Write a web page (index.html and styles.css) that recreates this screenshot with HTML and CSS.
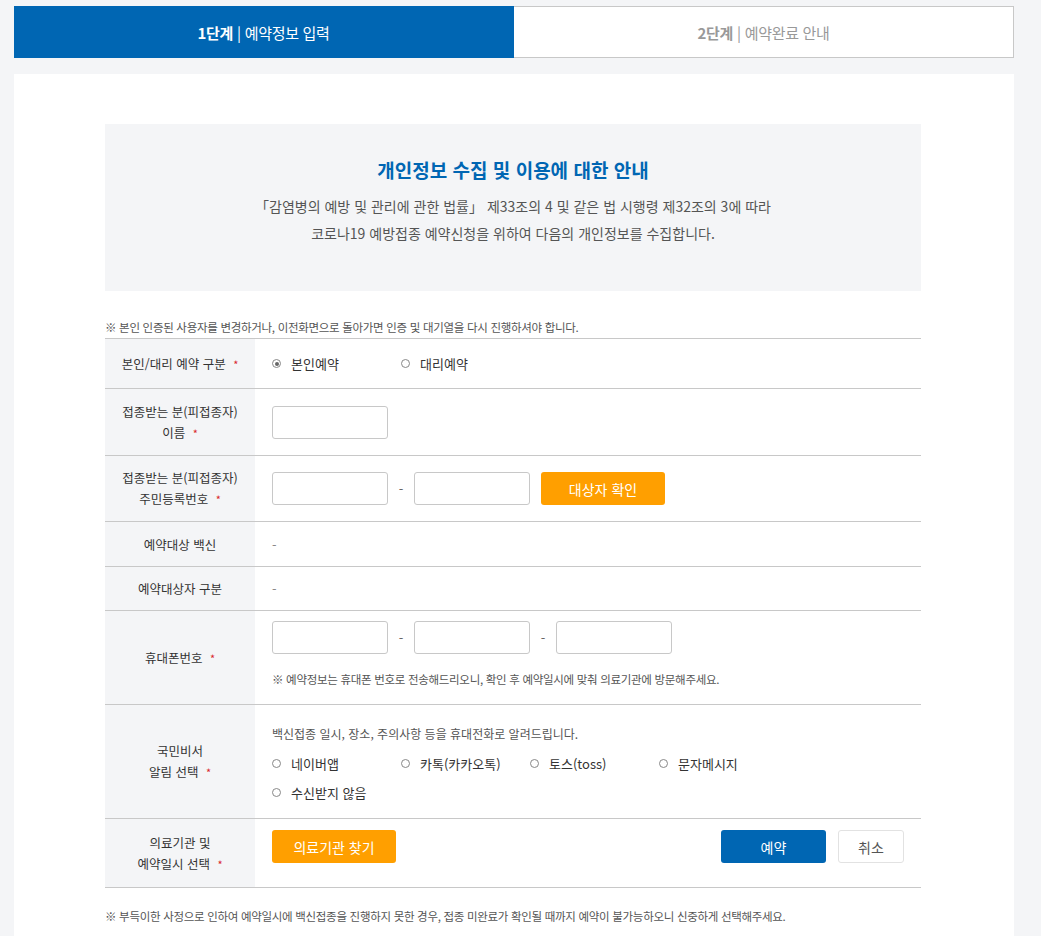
FILE: index.html
```html
<!DOCTYPE html>
<html lang="ko">
<head>
    <meta charset="UTF-8">
    <meta name="viewport" content="width=device-width, initial-scale=1.0">
    <title>코로나19 예방접종 예약</title>
    <link rel="stylesheet" href="styles.css">
</head>
<body>
    <div class="steps">
        <div class="step active"><strong>1단계</strong> | 예약정보 입력</div>
        <div class="step"><strong>2단계</strong> | 예약완료 안내</div>
    </div>

    <div class="card">
        <div class="info-box">
            <h2>개인정보 수집 및 이용에 대한 안내</h2>
            <p>「감염병의 예방 및 관리에 관한 법률」 제33조의 4 및 같은 법 시행령 제32조의 3에 따라<br>코로나19 예방접종 예약신청을 위하여 다음의 개인정보를 수집합니다.</p>
        </div>

        <p class="notice">※ 본인 인증된 사용자를 변경하거나, 이전화면으로 돌아가면 인증 및 대기열을 다시 진행하셔야 합니다.</p>

        <div class="form-table">
            <div class="row row-type">
                <div class="label"><p>본인/대리 예약 구분 <span class="req">*</span></p></div>
                <div class="field">
                    <div class="radios">
                        <label class="radio checked"><span class="dot"></span>본인예약</label>
                        <label class="radio"><span class="dot"></span>대리예약</label>
                    </div>
                </div>
            </div>
            <div class="row row-name">
                <div class="label"><p>접종받는 분(피접종자)<br>이름 <span class="req">*</span></p></div>
                <div class="field">
                    <input type="text" class="input">
                </div>
            </div>
            <div class="row row-id">
                <div class="label"><p>접종받는 분(피접종자)<br>주민등록번호 <span class="req">*</span></p></div>
                <div class="field inline">
                    <input type="text" class="input">
                    <span class="dash">-</span>
                    <input type="text" class="input">
                    <button class="btn orange">대상자 확인</button>
                </div>
            </div>
            <div class="row row-short">
                <div class="label"><p>예약대상 백신</p></div>
                <div class="field"><span class="muted">-</span></div>
            </div>
            <div class="row row-short last">
                <div class="label"><p>예약대상자 구분</p></div>
                <div class="field"><span class="muted">-</span></div>
            </div>
            <div class="row row-phone">
                <div class="label"><p>휴대폰번호 <span class="req">*</span></p></div>
                <div class="field top">
                    <div class="inline">
                        <input type="text" class="input">
                        <span class="dash">-</span>
                        <input type="text" class="input">
                        <span class="dash">-</span>
                        <input type="text" class="input">
                    </div>
                    <p class="field-note">※ 예약정보는 휴대폰 번호로 전송해드리오니, 확인 후 예약일시에 맞춰 의료기관에 방문해주세요.</p>
                </div>
            </div>
            <div class="row row-alarm">
                <div class="label"><p>국민비서<br>알림 선택 <span class="req">*</span></p></div>
                <div class="field top">
                    <p class="field-desc">백신접종 일시, 장소, 주의사항 등을 휴대전화로 알려드립니다.</p>
                    <div class="radios">
                        <label class="radio"><span class="dot"></span>네이버앱</label>
                        <label class="radio"><span class="dot"></span>카톡(카카오톡)</label>
                        <label class="radio"><span class="dot"></span>토스(toss)</label>
                        <label class="radio"><span class="dot"></span>문자메시지</label>
                        <label class="radio"><span class="dot"></span>수신받지 않음</label>
                    </div>
                </div>
            </div>
            <div class="row row-hospital">
                <div class="label"><p>의료기관 및<br>예약일시 선택 <span class="req">*</span></p></div>
                <div class="field split">
                    <button class="btn orange">의료기관 찾기</button>
                    <div class="actions">
                        <button class="btn blue">예약</button>
                        <button class="btn plain">취소</button>
                    </div>
                </div>
            </div>
        </div>

        <p class="notice bottom">※ 부득이한 사정으로 인하여 예약일시에 백신접종을 진행하지 못한 경우, 접종 미완료가 확인될 때까지 예약이 불가능하오니 신중하게 선택해주세요.</p>
    </div>
</body>
</html>
```

FILE: styles.css
```css
body {
    margin: 0;
    padding: 6px 27px 0 14px;
    background-color: #f4f5f7;
    font-family: "Noto Sans CJK KR", "Noto Sans", sans-serif;
    color: #333;
    font-size: 13px;
}
.steps {
    display: flex;
    height: 52px;
}
.step {
    flex: 1;
    display: flex;
    align-items: center;
    justify-content: center;
    background: white;
    border: 1px solid #c8c8c8;
    border-left: none;
    color: #999;
    font-size: 15px;
    letter-spacing: -0.3px;
}
.step strong {
    margin-right: 4px;
}
.step.active {
    background-color: #0066b3;
    border-color: #0066b3;
    color: white;
}
.card {
    margin-top: 16px;
    background: white;
    padding: 50px 93px 40px 91px;
}
.info-box {
    background-color: #f4f5f7;
    height: 167px;
    box-sizing: border-box;
    padding-top: 32px;
    text-align: center;
}
.info-box h2 {
    margin: 0 0 9px;
    font-size: 19px;
    color: #0066b3;
    font-weight: bold;
    line-height: 28px;
}
.info-box p {
    margin: 0;
    font-size: 14px;
    line-height: 27px;
    color: #555;
}
.notice {
    margin: 28px 0 3px;
    font-size: 11.5px;
    color: #555;
    line-height: 16px;
    letter-spacing: -0.3px;
}
.notice.bottom {
    margin-top: 20px;
}
.form-table {
    border-top: 1px solid #c8c8c8;
}
.row {
    display: grid;
    grid-template-columns: 150px 1fr;
    border-bottom: 1px solid #c8c8c8;
}
.label {
    background-color: #f4f5f7;
    display: flex;
    align-items: center;
    justify-content: center;
    text-align: center;
}
.label p {
    margin: 0;
    line-height: 21px;
    font-size: 12.5px;
    color: #333;
}
.req {
    color: #d9262c;
    margin-left: 4px;
    font-size: 11px;
}
.field {
    padding: 0 17px;
    display: flex;
    flex-direction: column;
    justify-content: center;
}
.field.top {
    justify-content: flex-start;
    padding-top: 10px;
}
.field.inline,
.inline {
    flex-direction: row;
    display: flex;
    align-items: center;
    justify-content: flex-start;
}
.row-type { height: 49px; }
.row-name { height: 66px; }
.row-id { height: 65px; }
.row-short { height: 44px; }
.row-short.last { height: 43px; }
.row-phone { height: 93px; }
.row-alarm { height: 113px; }
.row-hospital { height: 68px; }
.input {
    width: 116px;
    height: 33px;
    box-sizing: border-box;
    border: 1px solid #c8c8c8;
    border-radius: 3px;
    background: white;
    margin: 0;
}
.dash {
    width: 26px;
    text-align: center;
    color: #666;
}
.muted {
    color: #888;
}
.btn {
    height: 33px;
    border: none;
    border-radius: 3px;
    font-family: inherit;
    font-size: 14px;
    cursor: pointer;
    padding: 0;
}
.btn.orange {
    background-color: #ff9f00;
    color: white;
    width: 124px;
}
.field.inline .btn.orange {
    margin-left: 11px;
}
.actions {
    display: flex;
    gap: 12px;
}
.btn.blue {
    background-color: #0066b3;
    color: white;
    width: 105px;
}
.btn.plain {
    background: white;
    border: 1px solid #e2e2e2;
    color: #555;
    width: 66px;
}
.field.split {
    flex-direction: row;
    align-items: flex-start;
    justify-content: space-between;
    padding-top: 11px;
    padding-right: 17px;
}
.radios {
    display: flex;
    flex-wrap: wrap;
    color: #333;
    font-size: 13px;
}
.radio {
    width: 129px;
    display: flex;
    align-items: center;
    line-height: 29px;
}
.dot {
    width: 7px;
    height: 7px;
    border: 1px solid #888;
    border-radius: 50%;
    margin-right: 10px;
    position: relative;
}
.radio.checked .dot::after {
    content: "";
    position: absolute;
    left: 1.5px;
    top: 1.5px;
    width: 4px;
    height: 4px;
    border-radius: 50%;
    background: #666;
}
.field-note {
    margin: 17px 0 0;
    font-size: 11.5px;
    color: #555;
    letter-spacing: -0.3px;
}
.field-desc {
    margin: 10px 0 7px;
    font-size: 12px;
    color: #555;
}
```
